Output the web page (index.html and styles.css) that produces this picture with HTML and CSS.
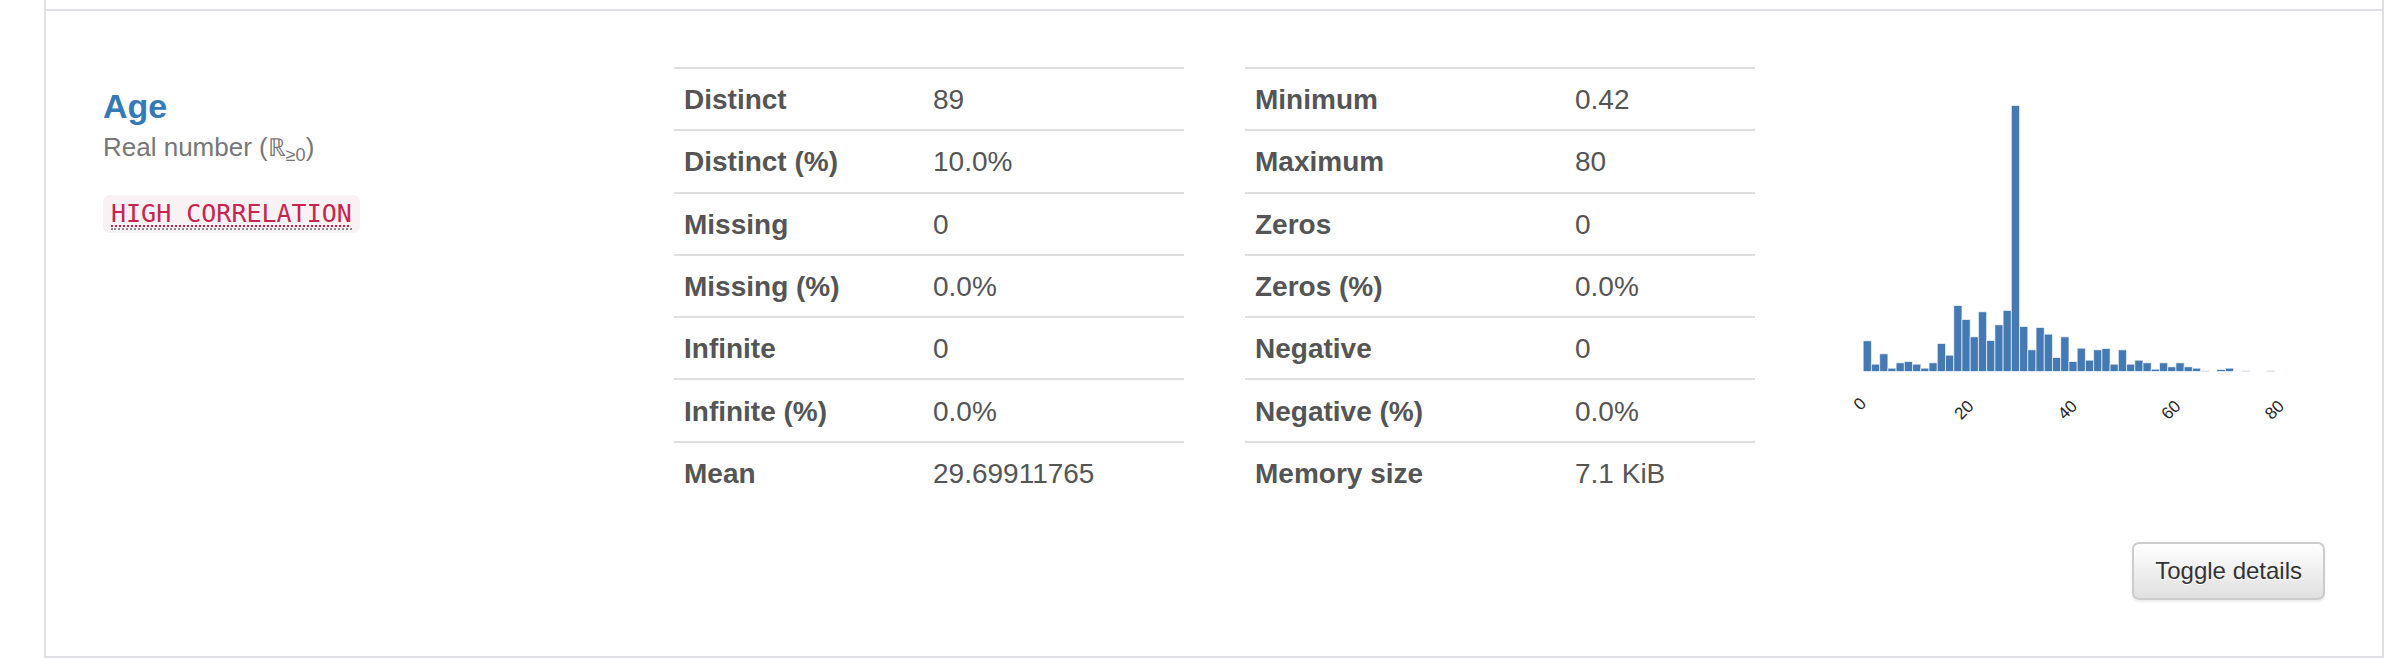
FILE: index.html
```html
<!DOCTYPE html>
<html lang="en">
<head>
<meta charset="utf-8">
<title>Age</title>
<link rel="stylesheet" href="styles.css">
</head>
<body>
<div class="page">
  <div class="prev-item"></div>
  <section class="variable">
    <div class="variable-row">
      <div class="var-info">
        <h4 class="var-name"><a href="#age">Age</a></h4>
        <p class="var-type">Real number (<span class="dbl">ℝ</span><sub>≥0</sub>)</p>
        <div class="alerts">
          <code class="alert-code"><abbr title="This variable is highly correlated with another variable">HIGH CORRELATION</abbr></code>
        </div>
      </div>
      <table class="stats stats-a">
        <colgroup><col class="label-col"><col></colgroup>
        <tbody>
          <tr><th>Distinct</th><td>89</td></tr>
          <tr><th>Distinct (%)</th><td>10.0%</td></tr>
          <tr><th>Missing</th><td>0</td></tr>
          <tr><th>Missing (%)</th><td>0.0%</td></tr>
          <tr><th>Infinite</th><td>0</td></tr>
          <tr><th>Infinite (%)</th><td>0.0%</td></tr>
          <tr><th>Mean</th><td>29.69911765</td></tr>
        </tbody>
      </table>
      <table class="stats stats-b">
        <colgroup><col class="label-col"><col></colgroup>
        <tbody>
          <tr><th>Minimum</th><td>0.42</td></tr>
          <tr><th>Maximum</th><td>80</td></tr>
          <tr><th>Zeros</th><td>0</td></tr>
          <tr><th>Zeros (%)</th><td>0.0%</td></tr>
          <tr><th>Negative</th><td>0</td></tr>
          <tr><th>Negative (%)</th><td>0.0%</td></tr>
          <tr><th>Memory size</th><td>7.1 KiB</td></tr>
        </tbody>
      </table>
      <div class="histogram">
        <svg class="hist-svg" width="510" height="436" viewBox="0 0 510 436" aria-label="Histogram of Age">
          <g class="bars" fill="#4479b3" stroke="#ffffff" stroke-opacity="0.65" stroke-width="1">
            <rect x="47.2" y="273.8" width="8.23" height="30.7"/>
            <rect x="55.43" y="297.2" width="8.23" height="7.3"/>
            <rect x="63.66" y="286.8" width="8.23" height="17.7"/>
            <rect x="71.89" y="301.2" width="8.23" height="3.3"/>
            <rect x="80.12" y="295.8" width="8.23" height="8.7"/>
            <rect x="88.35" y="294.5" width="8.23" height="10"/>
            <rect x="96.58" y="297.2" width="8.23" height="7.3"/>
            <rect x="104.81" y="301.2" width="8.23" height="3.3"/>
            <rect x="113.04" y="295.8" width="8.23" height="8.7"/>
            <rect x="121.27" y="276.5" width="8.23" height="28"/>
            <rect x="129.5" y="288.2" width="8.23" height="16.3"/>
            <rect x="137.73" y="238.5" width="8.23" height="66"/>
            <rect x="145.96" y="252.5" width="8.23" height="52"/>
            <rect x="154.19" y="269.8" width="8.23" height="34.7"/>
            <rect x="162.42" y="244.8" width="8.23" height="59.7"/>
            <rect x="170.65" y="273.5" width="8.23" height="31"/>
            <rect x="178.88" y="257.8" width="8.23" height="46.7"/>
            <rect x="187.11" y="243.5" width="8.23" height="61"/>
            <rect x="195.34" y="38.5" width="8.23" height="266"/>
            <rect x="203.57" y="259.5" width="8.23" height="45"/>
            <rect x="211.8" y="282.8" width="8.23" height="21.7"/>
            <rect x="220.03" y="260.5" width="8.23" height="44"/>
            <rect x="228.26" y="267.2" width="8.23" height="37.3"/>
            <rect x="236.49" y="290.5" width="8.23" height="14"/>
            <rect x="244.72" y="269.8" width="8.23" height="34.7"/>
            <rect x="252.95" y="294.5" width="8.23" height="10"/>
            <rect x="261.18" y="281.2" width="8.23" height="23.3"/>
            <rect x="269.41" y="293.2" width="8.23" height="11.3"/>
            <rect x="277.64" y="282.8" width="8.23" height="21.7"/>
            <rect x="285.87" y="281.5" width="8.23" height="23"/>
            <rect x="294.1" y="297.2" width="8.23" height="7.3"/>
            <rect x="302.33" y="282.8" width="8.23" height="21.7"/>
            <rect x="310.56" y="297.2" width="8.23" height="7.3"/>
            <rect x="318.79" y="293.2" width="8.23" height="11.3"/>
            <rect x="327.02" y="295.8" width="8.23" height="8.7"/>
            <rect x="335.25" y="302.2" width="8.23" height="2.3"/>
            <rect x="343.48" y="295.8" width="8.23" height="8.7"/>
            <rect x="351.71" y="299.8" width="8.23" height="4.7"/>
            <rect x="359.94" y="295.8" width="8.23" height="8.7"/>
            <rect x="368.17" y="299.8" width="8.23" height="4.7"/>
            <rect x="376.4" y="301.2" width="8.23" height="3.3"/>
            <rect x="384.63" y="303.8" width="8.23" height="0.7"/>
            <rect x="401.09" y="302.5" width="8.23" height="2"/>
            <rect x="409.32" y="301.2" width="8.23" height="3.3"/>
            <rect x="425.78" y="303.8" width="8.23" height="0.7"/>
            <rect x="450.47" y="303.8" width="8.23" height="0.7"/>
          </g>
          <g class="ticks" font-family="Liberation Sans, Arial, sans-serif" font-size="17" fill="#262626" text-anchor="middle" dominant-baseline="central">
            <text x="44" y="337" transform="rotate(-45 44 337)">0</text>
            <text x="148" y="343" transform="rotate(-45 148 343)">20</text>
            <text x="251.5" y="343" transform="rotate(-45 251.5 343)">40</text>
            <text x="355" y="343" transform="rotate(-45 355 343)">60</text>
            <text x="458.5" y="343" transform="rotate(-45 458.5 343)">80</text>
          </g>
        </svg>
      </div>
    </div>
    <div class="actions">
      <button class="btn-toggle" type="button">Toggle details</button>
    </div>
  </section>
</div>
</body>
</html>
```

FILE: styles.css
```css
* {
  box-sizing: border-box;
}

html, body {
  margin: 0;
  padding: 0;
  background: #ffffff;
}

body {
  font-family: "Liberation Sans", Arial, Helvetica, sans-serif;
  color: #555555;
  height: 658px;
  overflow: hidden;
}

.page {
  margin-left: 44px;
  width: 2340px;
  height: 658px;
  border-left: 2px solid #e0dfe6;
  border-right: 2px solid #e0dfe6;
  display: flex;
  flex-direction: column;
}

.prev-item {
  height: 9px;
  flex: none;
}

.variable {
  border-top: 2px solid #e0dfe6;
  border-bottom: 2px solid #e0dfe6;
  padding: 56px 57px 56px 57px;
}

.variable-row {
  display: grid;
  grid-template-columns: repeat(4, 510px);
  column-gap: 61px;
  align-items: start;
}

.var-info {
  display: flex;
  flex-direction: column;
  align-items: flex-start;
}

.var-name {
  margin: 21px 0 0 0;
  font-size: 34px;
  line-height: 37.4px;
  font-weight: 700;
}

.var-name a {
  color: #337ab7;
  text-decoration: none;
}

.var-type {
  margin: 9px 0 0 0;
  font-size: 26px;
  line-height: 27.5px;
  color: #777777;
}

.var-type .dbl {
  font-family: "DejaVu Sans", sans-serif;
  font-size: 25px;
  font-weight: 300;
}

.var-type sub {
  font-size: 18px;
  line-height: 0;
  vertical-align: -5px;
}

.alerts {
  margin-top: 33px;
  display: flex;
}

.alert-code {
  display: inline-block;
  font-family: "DejaVu Sans Mono", "Liberation Mono", monospace;
  font-size: 25px;
  line-height: 30px;
  padding: 4px 8px;
  color: #c7254e;
  background: #f9f2f4;
  border-radius: 7px;
}

.alert-code abbr {
  text-decoration: underline dotted #c7254e;
  text-underline-offset: 4px;
  text-decoration-thickness: 2px;
  border-bottom: 2px dotted #8a8a8a;
  cursor: help;
}

.stats {
  width: 510px;
  border-collapse: separate;
  border-spacing: 0;
  table-layout: fixed;
  font-size: 28px;
  line-height: 38px;
  color: #555555;
}

.stats-a .label-col {
  width: 249px;
}

.stats-b .label-col {
  width: 320px;
}

.stats th,
.stats td {
  text-align: left;
  padding: 12.15px 10px 10.15px 10px;
  border-top: 2px solid #dfdfdf;
  white-space: nowrap;
}

.stats th {
  font-weight: 700;
}

.stats td {
  font-weight: 400;
}

.histogram {
  display: flex;
}

.hist-svg {
  display: block;
}

.actions {
  margin-top: 39px;
  display: flex;
  justify-content: flex-end;
}

.btn-toggle {
  font-family: "Liberation Sans", Arial, Helvetica, sans-serif;
  font-size: 24px;
  line-height: 34px;
  padding: 10px 21px;
  color: #333333;
  background: linear-gradient(to bottom, #ffffff 0%, #e0e0e0 100%);
  border: 2px solid #cccccc;
  border-radius: 7px;
  text-shadow: 0 1px 0 #ffffff;
  box-shadow: inset 0 1px 0 rgba(255, 255, 255, 0.15), 0 2px 2px rgba(0, 0, 0, 0.08);
  cursor: pointer;
}
```
